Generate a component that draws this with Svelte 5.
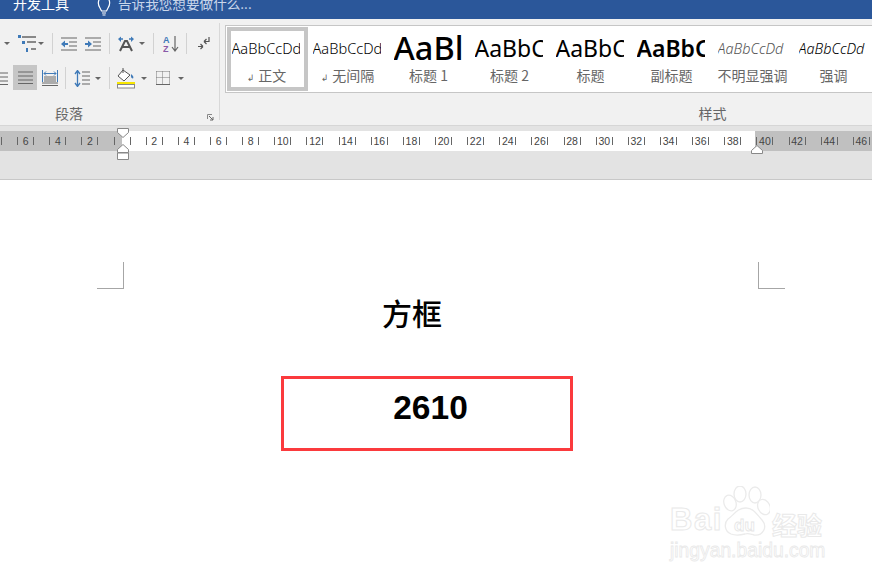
<script>
  const marks = [];
  for (let n = -8; n <= 46; n += 2) marks.push(n === 0 || n === -8 ? '' : String(Math.abs(n)));
  const styles = [
    { key: 's-normal', text: 'AaBbCcDd', label: '正文', mark: true, selected: true },
    { key: 's-normal', text: 'AaBbCcDd', label: '无间隔', mark: true },
    { key: 's-h1', text: 'AaBl', label: '标题 1' },
    { key: 's-h2', text: 'AaBbC', label: '标题 2' },
    { key: 's-h2', text: 'AaBbC', label: '标题' },
    { key: 's-sub', text: 'AaBbC', label: '副标题' },
    { key: 's-em s-light', text: 'AaBbCcDd', label: '不明显强调' },
    { key: 's-em', text: 'AaBbCcDd', label: '强调' }
  ];
</script>

<div class="app">
  <header class="title">
    <span class="tab">开发工具</span>
    <svg class="bulb" width="14" height="19" viewBox="0 0 14 19"><path d="M3 8 C1 5 1 1 3 -2 L11 -2 C13 1 13 5 11 8 L9.500 11 L4.500 11 Z" fill="none" stroke="#fff" stroke-width="1.200"/><path d="M5 13h4M5.500 15h3" stroke="#fff" stroke-width="1.200"/></svg>
    <span class="tell">告诉我您想要做什么...</span>
  </header>

  <section class="ribbon">
    <div class="para">
      <div class="tools">
        <div class="grp g1">
          <i class="caret"></i>
          <svg width="20" height="17" viewBox="0 0 20 17"><g fill="#3f7ab8"><rect x="1" y="0" width="3" height="3"/><rect x="5" y="6" width="3" height="3"/><rect x="9" y="13" width="2" height="4"/></g><path d="M5 2h14M10 7h9M14 14h5" stroke="#666" stroke-width="1.300"/></svg>
          <i class="caret"></i>
        </div>
        <div class="grp g2">
          <svg width="16" height="14" viewBox="0 0 16 14"><path d="M0 1h16M8 5h8M8 9h8M0 13h16" stroke="#666" stroke-width="1.200"/><path d="M0 7l4-3.500v2.500h3v2H4v2.500z" fill="#3f7ab8"/></svg>
          <svg width="16" height="14" viewBox="0 0 16 14"><path d="M0 1h16M8 5h8M8 9h8M0 13h16" stroke="#666" stroke-width="1.200"/><path d="M7 7L3 3.500V6H0v2h3v2.500z" fill="#3f7ab8"/></svg>
        </div>
        <div class="grp g3">
          <svg width="16" height="16" viewBox="0 0 16 16"><path d="M2 15L7 5h2l5 10M4.500 11h7" fill="none" stroke="#555" stroke-width="2"/><path d="M0 3l3-2.500v1.700h2v1.600H3V6zM16 3l-3-2.500v1.700h-2v1.600h2V6z" fill="#3f7ab8"/></svg>
          <i class="caret"></i>
        </div>
        <div class="grp g4">
          <svg width="16" height="17" viewBox="0 0 16 17"><text x="0" y="7.500" class="az az-a">A</text><text x="0" y="16.500" class="az az-z">Z</text><path d="M12 1v14M9 12l3 4 3-4" fill="none" stroke="#666" stroke-width="1.200"/></svg>
        </div>
        <div class="grp g5">
          <svg width="12" height="14" viewBox="0 0 12 14"><path d="M11 0v4.500H6M6 4.500l2.500-2.500M6 4.500L8.500 7" fill="none" stroke="#555" stroke-width="1.200"/><path d="M0 9.500h5M5 9.500L2.500 7M5 9.500L2.500 12" fill="none" stroke="#555" stroke-width="1.200"/></svg>
        </div>
      </div>

      <div class="tools row2">
        <div class="grp h1">
          <svg width="8" height="13" viewBox="0 0 8 13"><path d="M0 1h8M0 5h8M0 9h8M0 12.500h8" stroke="#666"/></svg>
          <span class="active"><svg width="15" height="13" viewBox="0 0 15 13"><path d="M0 1h15M0 5h15M0 9h15M0 12.500h15" stroke="#666"/></svg></span>
          <svg width="16" height="16" viewBox="0 0 16 16"><path d="M.5 0v12M15.500 0v12" stroke="#3f7ab8"/><path d="M2 3.500h12M2 3.500l2-2M2 3.500l2 2M14 3.500l-2-2M14 3.500l-2 2" fill="none" stroke="#3f7ab8"/><path d="M2 7h12M2 9h12M2 11h12M0 13h16M0 15.500h16" stroke="#666"/></svg>
        </div>
        <div class="grp h2">
          <svg width="16" height="17" viewBox="0 0 16 17"><path d="M3.500 1v15M1 4l2.500-3.500L6 4M1 13l2.500 3.500L6 13" fill="none" stroke="#3f7ab8" stroke-width="1.300"/><path d="M8 2h8M8 6h8M8 10h8M8 14h8" stroke="#666" stroke-width="1.200"/></svg>
          <i class="caret"></i>
        </div>
        <div class="grp h3">
          <svg width="18" height="21" viewBox="0 0 18 21"><path d="M6 2L1 8l6 5 6-6z" fill="#fff" stroke="#555"/><path d="M6 0v5" stroke="#555"/><path d="M14 6c2 1.500 3 3 2 4.500-1.500 0-2.500-1.500-2-4.500z" fill="#3f7ab8"/><rect x="0" y="14" width="18" height="2.500" fill="#f7e600"/><rect x=".5" y="16.500" width="17" height="3.500" fill="#fff" stroke="#888"/></svg>
          <i class="caret c1"></i>
          <svg class="borders" width="14" height="14" viewBox="0 0 14 14"><path d="M.5 .5h13M.5 .5v13M13.500 .5v13M6.500 .5v13M.5 6.500h13" fill="none" stroke="#777" stroke-dasharray="1 1"/><path d="M0 13.500h14" stroke="#666"/></svg>
          <i class="caret c2"></i>
        </div>
      </div>

      <footer class="glabel plabel">
        <span>段落</span>
        <svg class="launch" width="7" height="7" viewBox="0 0 7 7"><path d="M.5 5V.5H5" fill="none" stroke="#888"/><path d="M2 2l4 4M6 3v3H3" fill="none" stroke="#666"/></svg>
      </footer>
    </div>

    <div class="stylegroup">
      <div class="gallery">
        {#each styles as s}
          <div class="style" class:selected={s.selected}>
            <div class="preview {s.key}">{s.text}</div>
            <div class="slabel">{#if s.mark}<b class="ret">↲</b>{/if}{s.label}</div>
          </div>
        {/each}
      </div>
      <footer class="glabel slabelgroup">样式</footer>
    </div>
  </section>

  <section class="rulerzone">
    <div class="ruler">
      {#each marks as m}
        <span class="cell"><span class="tick">{m}</span></span>
      {/each}
    </div>
    <svg class="marker ml" width="12" height="33" viewBox="0 0 12 33"><path d="M.5 .5h11v4L6 9.500 .5 4.500zM6 16.500l5.500 5v3H.5v-3zM.5 25h11v6.500H.5z" fill="#fff" stroke="#888"/></svg>
    <svg class="marker mr" width="12" height="9" viewBox="0 0 12 9"><path d="M6 .5l5.500 5v3H.5v-3z" fill="#fff" stroke="#888"/></svg>
  </section>

  <main class="page">
    <div class="crops"><i class="crop cl"></i><i class="crop cr"></i></div>
    <h1>方框</h1>
    <div class="box">2610</div>

    <div class="wm">
      <div class="wm-top">
        <span class="bai">Bai</span>
        <span class="paw">
          <svg width="48" height="52" viewBox="0 0 48 52"><g fill="#fff" stroke="#ebebeb" stroke-width="1.300"><ellipse cx="8" cy="17" rx="6" ry="8" transform="rotate(-20 8 17)"/><ellipse cx="18" cy="8" rx="6" ry="8"/><ellipse cx="33" cy="9" rx="6" ry="8"/><ellipse cx="42" cy="21" rx="6" ry="8" transform="rotate(-25 42 21)"/><path d="M24 22c8 0 11 7 16 12 6 7 1 16-8 15-4-1-6-2-9-1-4 1-9 2-14 0-7-3-7-11-3-15 6-4 9-11 18-11z"/></g></svg>
          <span class="du">du</span>
        </span>
        <span class="jy">经验</span>
      </div>
      <div class="wm-url">jingyan.baidu.com</div>
    </div>
  </main>
</div>

<style>
  :global(body) { margin: 0; background: #fff; }
  .app { width: 872px; height: 580px; overflow: hidden; position: relative; font-family: "Noto Sans CJK SC", "Liberation Sans", sans-serif; }

  .title { height: 19px; background: #2b579a; display: flex; overflow: hidden; padding-left: 13px; box-sizing: border-box; }
  .tab, .tell { line-height: 14px; margin-top: -4px; height: 20px; white-space: nowrap; }
  .tab { color: #fff; font-size: 14px; width: 57px; }
  .bulb { margin-left: 27px; flex: none; }
  .tell { color: #c9d6ea; font-size: 13.6px; margin-left: 7px; }

  .ribbon { height: 107px; background: #f1f1f1; border-bottom: 1px solid #d6d6d6; box-sizing: border-box; display: flex; }
  .para { width: 220px; box-sizing: border-box; padding-top: 14px; position: relative; flex: none; overflow: hidden; }
  .para::after { content: ""; position: absolute; right: 0; top: 4px; height: 97px; width: 1px; background: #d8d8d8; }
  .tools { display: flex; height: 21px; }
  .row2 { height: 25px; margin-top: 12px; }
  .grp { display: flex; align-items: center; box-sizing: border-box; border-right: 1px solid #d2d2d2; flex: none; }
  .row2 .grp { height: 22px; margin-top: 1px; }
  .g1 { width: 53px; padding-left: 4px; gap: 1px; }
  .g1 .caret:first-child { margin-right: 6px; }
  .g2 { width: 57px; padding-left: 8px; gap: 8px; }
  .g3 { width: 44px; padding-left: 8px; gap: 5px; }
  .g4 { width: 33px; padding-left: 9px; }
  .g5 { border-right: 0; padding-left: 11px; }
  .h1 { width: 66px; gap: 5px; }
  .active { width: 24px; height: 25px; background: #c6c6c6; display: flex; align-items: center; justify-content: center; margin-top: -1px; flex: none; }
  .h2 { width: 44px; padding-left: 8px; gap: 5px; }
  .h3 { border-right: 0; padding-left: 7px; }
  .c1 { margin-left: 6px; }
  .borders { margin-left: 9px; }
  .c2 { margin-left: 8px; }
  .caret { width: 0; height: 0; border-left: 3px solid transparent; border-right: 3px solid transparent; border-top: 3px solid #666; flex: none; }
  .az { font: bold 9px "Liberation Sans", sans-serif; }
  .az-a { fill: #3f7ab8; }
  .az-z { fill: #8a5aa8; }

  .glabel { text-align: center; font-size: 14px; line-height: 18px; color: #666; }
  .plabel { width: 138px; margin-top: 13px; position: relative; }
  .launch { position: absolute; left: 207px; top: 10px; }

  .stylegroup { flex: 1; min-width: 0; padding: 6px 0 0 5px; }
  .gallery { height: 68px; box-sizing: border-box; border: 1px solid #c6c6c6; border-right: 0; background: #fff; display: flex; padding: 1px 0 0 1px; overflow: hidden; }
  .slabelgroup { margin-top: 11px; padding-left: 328px; }
  .style { width: 81px; height: 64px; flex: none; box-sizing: border-box; border: 4px solid transparent; display: flex; flex-direction: column; align-items: center; }
  .style.selected { border-color: #c6c6c6; }
  .preview { width: 68px; height: 35px; line-height: 35px; margin-right: 4px; overflow: hidden; white-space: nowrap; color: #000; font-family: "Noto Sans", "Liberation Sans", sans-serif; font-size: 14.6px; font-weight: 300; flex: none; }
  .s-h1 { font-size: 32.5px; font-weight: 500; margin-top: -2px; height: 37px; line-height: 37px; width: 70px; margin-right: 2px; }
  .s-h2 { font-size: 23px; font-weight: 400; }
  .s-sub { font-size: 23px; font-weight: 600; }
  .s-em { font-style: italic; font-size: 14.4px; }
  .s-light { color: #555; }
  .slabel { font-size: 14px; line-height: 18px; color: #666; padding-right: 2px; white-space: nowrap; }
  .ret { font: normal 9px "DejaVu Sans", sans-serif; margin-right: 4px; }

  .rulerzone { height: 54px; background: #e3e3e3; border-bottom: 1px solid #c8c8c8; box-sizing: border-box; padding-top: 5px; position: relative; }
  .ruler { height: 20px; display: flex; margin-left: -22.5px; width: 930px; overflow: hidden;
    background: linear-gradient(to right, #c0c0c0 144.5px, #fff 144.5px, #fff 777.5px, #c0c0c0 777.5px); }
  .cell { width: 32.15px; flex: none; display: flex; justify-content: center; align-items: center; }
  .tick { width: 17px; display: flex; justify-content: space-between; align-items: center; font: 10.5px "Liberation Sans", sans-serif; color: #444; line-height: 20px; }
  .tick::before, .tick::after { content: ""; width: 1px; height: 8px; background: #666; }
  .marker { position: absolute; }
  .ml { left: 116.500px; top: 2px; }
  .mr { left: 751px; top: 19px; }

  .page { height: 400px; background: #fff; padding-top: 82px; box-sizing: border-box; position: relative; }
  .crops { width: 688px; margin-left: 97px; display: flex; justify-content: space-between; }
  .crop { width: 27px; height: 27px; border-bottom: 1px solid #a6a6a6; box-sizing: border-box; }
  .cl { border-right: 1px solid #a6a6a6; }
  .cr { border-left: 1px solid #a6a6a6; }
  h1 { margin: 6px 0 0 382px; font-size: 30px; line-height: 34px; font-weight: 500; color: #000; }
  .box { margin: 47px 0 0 281px; width: 292px; height: 75px; box-sizing: border-box; border: 3px solid #fb3a3d; font: bold 33.5px/57px "Liberation Sans", sans-serif; color: #000; text-align: center; padding-right: 3px; padding-left: 10px; }

  .wm { position: absolute; left: 670px; top: 306px; width: 170px; }
  .wm-top { display: flex; align-items: flex-end; height: 52px; }
  .bai { font: bold 31px/28px "Liberation Sans", sans-serif; color: #fff; -webkit-text-stroke: 1px #e9e9e9; width: 52px; margin-bottom: 4px; letter-spacing: 1.500px; }
  .paw { position: relative; width: 48px; height: 52px; flex: none; }
  .du { position: absolute; left: 12px; top: 31px; font: bold 17px/18px "Liberation Sans", sans-serif; color: #fff; -webkit-text-stroke: .8px #e6e6e6; }
  .jy { font-size: 25px; line-height: 28px; font-weight: bold; color: #fff; -webkit-text-stroke: 1px #e9e9e9; margin-left: 2px; white-space: nowrap; }
  .wm-url { font: 19.3px/22px "Liberation Sans", sans-serif; color: #fff; -webkit-text-stroke: .8px #e9e9e9; margin-top: 2px; white-space: nowrap; }
</style>
